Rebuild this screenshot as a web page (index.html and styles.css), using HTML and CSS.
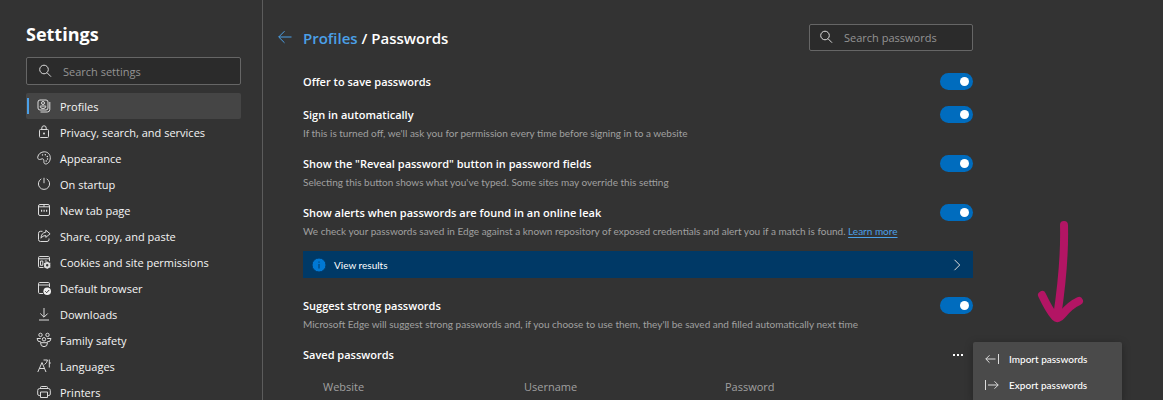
FILE: index.html
```html
<!DOCTYPE html>
<html lang="en">
<head>
  <meta charset="UTF-8">
  <title>Settings</title>
  <link rel="stylesheet" href="styles.css">
</head>
<body>
  <aside class="sidebar">
    <h1 class="sidebar-title">Settings</h1>
    <label class="search-box">
      <svg class="icon" viewBox="0 0 14 14"><circle cx="6" cy="5.5" r="4.3"/><path d="M9 8.7l4 4"/></svg>
      <input type="text" placeholder="Search settings" aria-label="Search settings">
    </label>
    <nav class="nav">
      <a class="nav-item active" href="#">
        <svg class="icon" viewBox="0 0 14 14"><rect x="1" y="1" width="10" height="10" rx="2"/><circle cx="6" cy="4" r="1.5"/><path d="M3.300 7h5.400v.6q0 1.900-2.700 1.900T3.300 7.600z"/><path d="M12.800 3v7.500q0 2.500-2.500 2.500H3.500"/></svg>
        Profiles
      </a>
      <a class="nav-item" href="#">
        <svg class="icon" viewBox="0 0 14 14"><rect x="2.500" y="4.500" width="9" height="8" rx="1"/><path d="M4.800 4.500V3a2.200 2.200 0 0 1 4.400 0v1.500"/><circle class="fill" cx="7" cy="8.500" r=".9"/></svg>
        Privacy, search, and services
      </a>
      <a class="nav-item" href="#">
        <svg class="icon" viewBox="0 0 14 14"><path d="M.7 6.200C1.200 3 4 .8 7.300.8c3.600 0 6 2.700 6 5.900 0 3.600-2.200 6.300-4.500 6.300-1.800 0-2-1.400-1.900-2.700.1-1.700-.6-2.600-1.700-2.500-1.200.1-1.500.9-2.700.7C1.300 8.400.6 7.500.7 6.200z"/><circle class="fill" cx="5.500" cy="3.900" r=".7"/><circle class="fill" cx="8.300" cy="3.700" r=".7"/><circle class="fill" cx="10.300" cy="5.500" r=".7"/><circle class="fill" cx="10.500" cy="8" r=".7"/><circle class="fill" cx="9.200" cy="10" r=".7"/></svg>
        Appearance
      </a>
      <a class="nav-item" href="#">
        <svg class="icon" viewBox="0 0 14 14"><path d="M7 .8v5.400M4.300 1.900a5.600 5.600 0 1 0 5.400 0"/></svg>
        On startup
      </a>
      <a class="nav-item" href="#">
        <svg class="icon" viewBox="0 0 14 14"><rect x="1.500" y="1.500" width="11" height="11" rx="1.500"/><path d="M1.500 3.800h5.500M7 1.500v2.300h5.500"/><path class="dots" d="M4 7.800h1.200M6.500 7.800h1.200M9 7.800h1.200"/></svg>
        New tab page
      </a>
      <a class="nav-item" href="#">
        <svg class="icon" viewBox="0 0 14 14"><path d="M5.500 2.300h-2q-2 0-2 2v6.200q0 2 2 2h6.500q2 0 2-2V9.500"/><path d="M8.800 1.200l4.300 3.600-4.300 3.600V6.500q-3-.2-4.800 2.700.2-5.400 4.800-6z"/></svg>
        Share, copy, and paste
      </a>
      <a class="nav-item" href="#">
        <svg class="icon" viewBox="0 0 14 14"><path d="M6.500 12.500H2.700q-1.200 0-1.200-1.200V2.700q0-1.200 1.200-1.200h8.600q1.200 0 1.200 1.200v3.500M1.500 3.800h11M3.500 6h2.300v4.300H3.500zM7.800 6h2"/><circle class="gear" cx="10.200" cy="10.200" r="2.200"/><path d="M10.200 6.500v1.300M10.200 12.600v1.300M7 8.300l1.100.6M12.300 11.500l1.100.6M7 12.100l1.100-.6M12.300 8.900l1.100-.6"/></svg>
        Cookies and site permissions
      </a>
      <a class="nav-item" href="#">
        <svg class="icon" viewBox="0 0 14 14"><path d="M6 12.500H2.700q-1.200 0-1.200-1.200V2.700q0-1.200 1.200-1.200h8.600q1.200 0 1.200 1.200V6M1.500 4h11"/><circle class="fill" cx="10.200" cy="10.200" r="3.800"/><path class="check" d="M8.300 10.300l1.400 1.400 2.500-2.700"/></svg>
        Default browser
      </a>
      <a class="nav-item" href="#">
        <svg class="icon" viewBox="0 0 14 14"><path d="M7 1v9M3.300 6.500L7 10.200l3.700-3.700M2 13h10"/></svg>
        Downloads
      </a>
      <a class="nav-item" href="#">
        <svg class="icon" viewBox="0 0 14 14"><circle cx="3.500" cy="1.900" r="1.700"/><circle cx="10.500" cy="1.900" r="1.700"/><circle cx="7" cy="6.300" r="1.700"/><path d="M4 9q-4 0-4-3.500h3.800M10 9q4 0 4-3.500h-3.800M3.500 9.700h7q0 4-3.500 4t-3.500-4z"/></svg>
        Family safety
      </a>
      <a class="nav-item" href="#">
        <svg class="icon" viewBox="0 0 14 14"><path d="M.8 13L5 3.500 9 13M2.300 9.500h5.400M6.500 1h4q-.5 3-3 4.500M12.300.5v8M12.300 4h1.500"/></svg>
        Languages
      </a>
      <a class="nav-item" href="#">
        <svg class="icon" viewBox="0 0 14 14"><path d="M3.300 10.500H2.200Q.7 10.500.7 9V5.500q0-2 2-2h8.600q2 0 2 2V9q0 1.500-1.500 1.500h-1.100M3.500 3.500v-1q0-1 1-1h5q1 0 1 1v1M3.500 7h7v5.500h-7z"/></svg>
        Printers
      </a>
    </nav>
  </aside>

  <main class="content">
    <header class="content-header">
      <a class="back-link" href="#" aria-label="Back">
        <svg class="icon" viewBox="0 0 14 14"><path d="M13.500 6H.8M6.500.2L.7 6l5.800 5.800"/></svg>
      </a>
      <h2 class="breadcrumb"><a href="#">Profiles</a> / Passwords</h2>
      <label class="search-box password-search">
        <svg class="icon" viewBox="0 0 14 14"><circle cx="6" cy="4.500" r="4.300"/><path d="M9 7.700l4 4"/></svg>
        <input type="text" placeholder="Search passwords" aria-label="Search passwords">
      </label>
    </header>

    <div class="setting">
      <div class="setting-row">
        <label for="offerSave">Offer to save passwords</label>
        <input type="checkbox" class="toggle" id="offerSave" checked>
      </div>
    </div>
    <div class="setting">
      <div class="setting-row">
        <label for="autoSignIn">Sign in automatically</label>
        <input type="checkbox" class="toggle" id="autoSignIn" checked>
      </div>
      <p class="description">If this is turned off, we'll ask you for permission every time before signing in to a website</p>
    </div>
    <div class="setting">
      <div class="setting-row">
        <label for="revealButton">Show the "Reveal password" button in password fields</label>
        <input type="checkbox" class="toggle" id="revealButton" checked>
      </div>
      <p class="description">Selecting this button shows what you've typed. Some sites may override this setting</p>
    </div>
    <div class="setting">
      <div class="setting-row">
        <label for="leakAlerts">Show alerts when passwords are found in an online leak</label>
        <input type="checkbox" class="toggle" id="leakAlerts" checked>
      </div>
      <p class="description">We check your passwords saved in Edge against a known repository of exposed credentials and alert you if a match is found. <a href="#">Learn more</a></p>
      <button class="results-button">
        <svg class="info-icon" viewBox="0 0 14 14"><circle cx="7" cy="7" r="7"/><path d="M7 6v4.500M7 3.500v1.200"/></svg>
        <span>View results</span>
        <svg class="icon chevron" viewBox="0 0 14 14"><path d="M4.500 1.800L9.700 7l-5.200 5.200"/></svg>
      </button>
    </div>
    <div class="setting">
      <div class="setting-row">
        <label for="suggestStrong">Suggest strong passwords</label>
        <input type="checkbox" class="toggle" id="suggestStrong" checked>
      </div>
      <p class="description">Microsoft Edge will suggest strong passwords and, if you choose to use them, they'll be saved and filled automatically next time</p>
    </div>

    <div class="setting-row saved-row">
      <h3>Saved passwords</h3>
      <div class="more">
        <button class="more-button" aria-label="More actions"><i></i><i></i><i></i></button>
        <div class="menu">
          <button class="menu-item">
            <svg class="icon" viewBox="0 0 14 14"><path d="M10.500 7H.8M4.500 3.300L.8 7l3.700 3.700M13.500 2v10"/></svg>
            Import passwords
          </button>
          <button class="menu-item">
            <svg class="icon" viewBox="0 0 14 14"><path d="M3 7h10.200M9.500 3.300L13.200 7l-3.700 3.700M.5 2v10"/></svg>
            Export passwords
          </button>
        </div>
        <svg class="arrow" viewBox="0 0 48 106"><path d="M27 6Q28 45 20 98M5 76Q12 91 18 98Q21 101 25 96Q33 86 42 82"/></svg>
      </div>
    </div>
    <table class="password-table">
      <thead>
        <tr><th>Website</th><th>Username</th><th>Password</th></tr>
      </thead>
    </table>
  </main>
</body>
</html>
```
FILE: styles.css
```css
* {
  box-sizing: border-box;
}
body {
  margin: 0;
  height: 100vh;
  display: flex;
  overflow: hidden;
  background-color: #333;
  color: #fff;
  font-family: "Segoe UI", "Open Sans", sans-serif;
  font-size: 11px;
}
h1, h2, h3, p {
  margin: 0;
}
button, input {
  font: inherit;
  color: inherit;
}
button {
  border: none;
  cursor: pointer;
}
a {
  color: #4ba0e8;
  text-decoration: none;
}
.icon {
  width: 14px;
  height: 14px;
  flex: none;
  overflow: visible;
  fill: none;
  stroke: #dcdcdc;
  stroke-width: 1;
}
.icon .fill {
  fill: #f0f0f0;
  stroke: none;
}
.icon .dots {
  stroke-width: 2;
}
.icon .gear {
  stroke-width: 2;
}
.icon .check {
  stroke: #333;
}

/* Sidebar */
.sidebar {
  width: 263px;
  flex: none;
  padding: 22px 21px 0 26px;
  border-right: 1px solid #5c5c5c;
}
.sidebar-title {
  font-size: 18px;
  line-height: 24px;
  font-weight: 700;
}
.search-box {
  display: flex;
  align-items: center;
  height: 28px;
  padding: 0 11px;
  gap: 11px;
  background-color: #2b2b2b;
  border: 1px solid #666;
  border-radius: 2px;
}
.search-box input {
  flex: 1;
  min-width: 0;
  padding: 0;
  background: none;
  border: none;
  outline: none;
}
.search-box input::placeholder {
  color: #949494;
}
.sidebar .search-box {
  margin-top: 11px;
}
.nav {
  display: flex;
  flex-direction: column;
  margin-top: 8px;
}
.nav-item {
  display: flex;
  align-items: center;
  gap: 9px;
  height: 26px;
  flex: none;
  padding-left: 11px;
  color: #f5f5f5;
  border-radius: 2px;
}
.nav-item.active {
  background: linear-gradient(#4ba0e8, #4ba0e8) 1px 5px / 2px 16px no-repeat #454545;
}

/* Passwords page */
.content {
  flex: 1;
  max-width: 710px;
  padding: 24px 0 0 15px;
}
.content-header {
  display: flex;
  align-items: center;
  margin-bottom: 22px;
}
.back-link {
  display: flex;
  width: 25px;
}
.back-link .icon {
  stroke: #4ba0e8;
}
.breadcrumb {
  flex: 1;
  font-size: 15px;
  line-height: 20px;
  font-weight: 600;
}
.password-search {
  width: 164px;
  height: 27px;
  padding: 0 9px;
}
.setting,
.saved-row,
.password-table {
  margin-left: 25px;
}
.setting {
  margin-bottom: 16px;
}
.setting-row {
  display: flex;
  justify-content: space-between;
  align-items: center;
  height: 17px;
  font-weight: 600;
}
.setting-row h3 {
  font-size: 11px;
  font-weight: 600;
}
.description {
  margin-top: 4px;
  font-family: "Segoe UI", Lato, sans-serif;
  font-size: 10px;
  line-height: 12px;
  color: #a0a0a0;
}
.description a {
  text-decoration: underline;
  text-underline-offset: 2px;
}
.toggle {
  appearance: none;
  display: flex;
  align-items: center;
  width: 33px;
  height: 17px;
  margin: 0;
  padding: 0 4px;
  border-radius: 9px;
  background-color: #777;
  cursor: pointer;
}
.toggle::before {
  content: "";
  width: 9px;
  height: 9px;
  border-radius: 50%;
  background-color: #fff;
}
.toggle:checked {
  justify-content: flex-end;
  background-color: #006cbe;
}
.results-button {
  display: flex;
  align-items: center;
  gap: 8px;
  width: 100%;
  height: 27px;
  margin: 14px 0 19px;
  padding: 0 9px;
  background-color: #003966;
  font-family: "Segoe UI", Lato, sans-serif;
  font-size: 10px;
  text-align: left;
}
.info-icon {
  width: 14px;
  height: 14px;
  fill: #0078d4;
  stroke: #003966;
}
.chevron {
  margin-left: auto;
}
.more {
  position: relative;
}
.more-button {
  display: flex;
  align-items: center;
  justify-content: center;
  gap: 2px;
  width: 30px;
  height: 17px;
  padding: 0;
  background: none;
}
.more-button i {
  width: 2px;
  height: 2px;
  background-color: #fff;
}
/* Opens beside the button */
.menu {
  position: absolute;
  top: -4px;
  left: 100%;
  width: 149px;
  padding: 4px 0;
  background-color: #4a4a4a;
  border-radius: 2px;
  box-shadow: 0 2px 8px rgba(0, 0, 0, 0.3);
}
.menu-item {
  display: flex;
  align-items: center;
  gap: 10px;
  width: 100%;
  height: 26px;
  padding: 0 12px;
  background: none;
  font-family: "Segoe UI", Lato, sans-serif;
  font-size: 10px;
  font-weight: 500;
}
.arrow {
  position: absolute;
  bottom: 38px;
  left: 94px;
  width: 48px;
  height: 106px;
  fill: none;
  stroke: #b31564;
  stroke-width: 8;
  stroke-linecap: round;
  stroke-linejoin: round;
}
.password-table {
  width: calc(100% - 25px);
  margin-top: 16px;
  table-layout: fixed;
  border-collapse: collapse;
}
.password-table th {
  width: 30%;
  padding: 0 0 0 20px;
  line-height: 16px;
  font-weight: 400;
  text-align: left;
  color: #a0a0a0;
}
.password-table th:last-child {
  width: 40%;
}
```
